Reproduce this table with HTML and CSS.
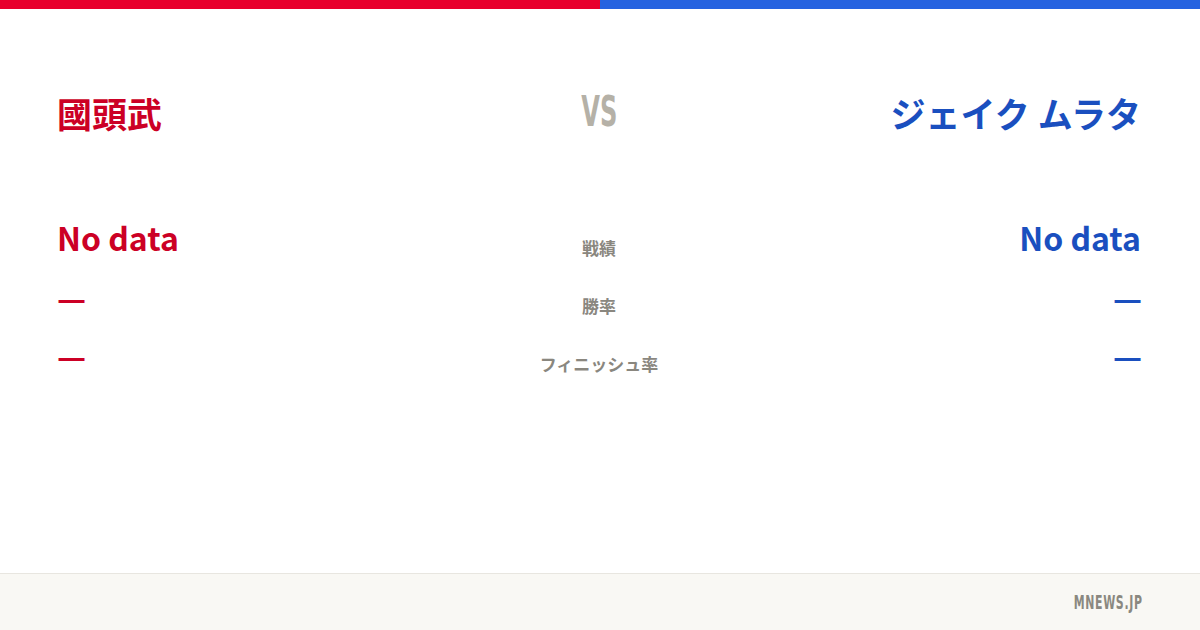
FILE: index.html
```html
<!DOCTYPE html>
<html lang="ja">
<head>
    <meta charset="UTF-8">
    <meta name="viewport" content="width=device-width, initial-scale=1.0">
    <title>國頭武 vs ジェイク ムラタ</title>
    <link rel="stylesheet" href="styles.css">
</head>
<body>
    <div class="topbar">
        <div class="bar-red"></div>
        <div class="bar-blue"></div>
    </div>
    <div class="card">
        <div class="header">
            <h1 class="name red">國頭武</h1>
            <div class="vs"><span>VS</span></div>
            <h1 class="name blue right">ジェイク ムラタ</h1>
        </div>
        <div class="stats">
            <div class="stat-row">
                <div class="value big red">No data</div>
                <div class="label">戦績</div>
                <div class="value big blue right">No data</div>
            </div>
            <div class="stat-row">
                <div class="value dash red">—</div>
                <div class="label">勝率</div>
                <div class="value dash blue right">—</div>
            </div>
            <div class="stat-row">
                <div class="value dash red">—</div>
                <div class="label">フィニッシュ率</div>
                <div class="value dash blue right">—</div>
            </div>
        </div>
    </div>
    <div class="footer">
        <span class="brand">MNEWS.JP</span>
    </div>
</body>
</html>
```

FILE: styles.css
```css
body {
    font-family: 'Noto Sans CJK JP', 'Noto Sans', sans-serif;
    margin: 0;
    padding: 0;
    width: 1200px;
    height: 630px;
    background: #fff;
    display: flex;
    flex-direction: column;
    overflow: hidden;
}
.topbar {
    display: flex;
    height: 9px;
}
.bar-red {
    flex: 1;
    background: #e8002d;
}
.bar-blue {
    flex: 1;
    background: #2563e0;
}
.card {
    flex: 1;
    padding: 0 59px 0 57px;
}
.red {
    color: #cc0025;
}
.blue {
    color: #1a4fbf;
}
.right {
    text-align: right;
}
.header {
    display: grid;
    grid-template-columns: 1fr 200px 1fr;
    align-items: center;
    height: 212px;
}
.name {
    font-size: 35px;
    font-weight: 700;
    margin: -5px 0 0;
    line-height: 1;
}
.vs {
    text-align: center;
    margin-top: -8px;
}
.vs span {
    display: inline-block;
    font-family: 'Liberation Sans Narrow', 'DejaVu Sans Condensed', sans-serif;
    font-weight: 700;
    font-size: 42px;
    color: #b5b1a7;
    transform: scaleX(0.64);
}
.stat-row {
    display: grid;
    grid-template-columns: 1fr 200px 1fr;
    align-items: center;
    height: 58px;
}
.value {
    font-weight: 700;
    line-height: 1;
}
.big {
    font-size: 32px;
    margin-top: -27px;
}
.dash {
    font-size: 32px;
    margin-top: -22px;
}
.dash.right {
    margin-right: -1px;
}
.label {
    text-align: center;
    font-size: 17px;
    font-weight: 700;
    color: #8a877f;
    margin-top: -6px;
}
.footer {
    height: 56px;
    background: #f9f8f4;
    border-top: 1px solid #e8e6e0;
    display: flex;
    align-items: center;
    justify-content: flex-end;
    padding-right: 57px;
}
.brand {
    display: inline-block;
    font-family: 'Liberation Sans Narrow', 'DejaVu Sans Condensed', sans-serif;
    font-weight: 700;
    font-size: 19px;
    color: #8a8880;
    letter-spacing: 1px;
    transform: scaleX(0.64);
    transform-origin: right center;
}
```
